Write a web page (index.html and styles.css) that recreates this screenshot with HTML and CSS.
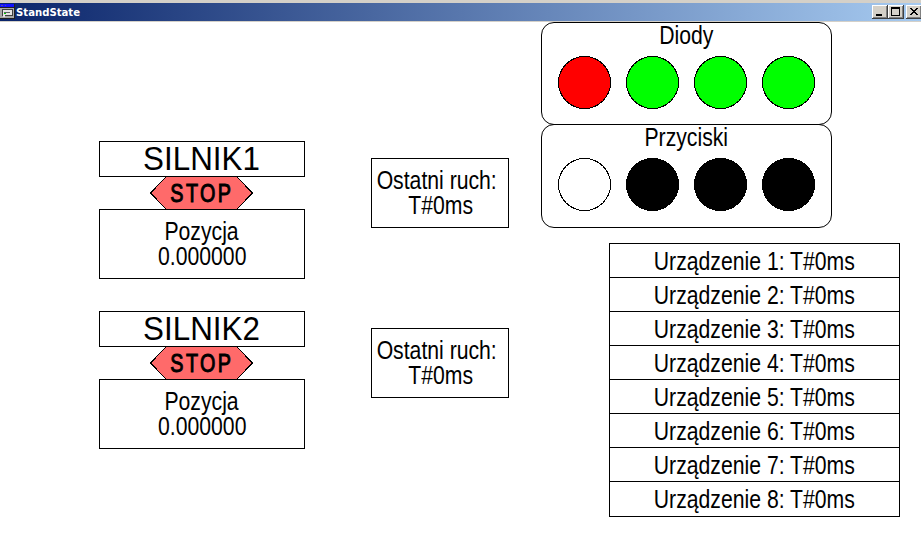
FILE: index.html
```html
<!DOCTYPE html>
<html lang="pl">
<head>
<meta charset="utf-8">
<title>StandState</title>
<link rel="stylesheet" href="styles.css">
</head>
<body>
<header class="titlebar">
  <svg class="app-icon" width="15" height="15" viewBox="0 0 15 15" shape-rendering="crispEdges">
    <path fill="#202020" d="M0 0h15v15H0z"/>
    <path fill="#1010ff" d="M0 0h14v3H0z"/><path fill="#5050a0" d="M1 1h2v1H1zM5 1h1v1H5z"/>
    <path fill="#a8a8a8" d="M0 4h14v10H0z"/>
    <path fill="#404040" d="M2 5h11v1H2zM2 5h1v7H2zM5 11h8v1H5zM12 6h1v6h-1z"/>
    <path fill="#e4e4e4" d="M3 6h9v5H5v2H3z"/><path fill="#606060" d="M4 8h6v1H4z"/>
    <path fill="#0c0" d="M4 9h2v1H4z"/>
  </svg>
  <h1 class="caption">StandState</h1>
  <div class="controls">
    <svg class="control" width="16" height="14" viewBox="0 0 16 14" shape-rendering="crispEdges"><path d="M4 9h6v2H4z"/></svg>
    <svg class="control" width="16" height="14" viewBox="0 0 16 14" shape-rendering="crispEdges"><path fill-rule="evenodd" d="M3 2h9v9H3zM4 4v6h7V4z"/></svg>
    <svg class="control close" width="16" height="14" viewBox="0 0 16 14" shape-rendering="crispEdges"><path d="M4 3h2v1h1v1h2V4h1V3h2v1h-1v1h-1v1H9v1h1v1h1v1h1v1h-2V9H9V8H7v1H6v1H4V9h1V8h1V7h1V6H6V5H5V4H4z"/></svg>
  </div>
</header>
<main class="canvas">
  <section class="motors">
    <article class="motor">
      <h2 class="box name"><span>SILNIK1</span></h2>
      <div class="state"><svg width="103" height="33" viewBox="0 0 103 33" shape-rendering="crispEdges"><path d="M16.5-.5h70l16 16.5-16 16.500h-70L.5 16z"/></svg><b>STOP</b></div>
      <div class="box position"><span>Pozycja</span><span>0.000000</span></div>
    </article>
    <article class="motor">
      <h2 class="box name"><span>SILNIK2</span></h2>
      <div class="state"><svg width="103" height="33" viewBox="0 0 103 33" shape-rendering="crispEdges"><path d="M16.500-.5h70l16 16.5-16 16.500h-70L.5 16z"/></svg><b>STOP</b></div>
      <div class="box position"><span>Pozycja</span><span>0.000000</span></div>
    </article>
  </section>
  <section class="moves">
    <div class="box move"><span class="label">Ostatni ruch:</span><span>T#0ms</span></div>
    <div class="box move"><span class="label">Ostatni ruch:</span><span>T#0ms</span></div>
  </section>
  <section class="side">
    <div class="panel diodes">
      <h2><span>Diody</span></h2>
      <div class="lamps">
        <svg class="lamp red" viewBox="0 0 53 53"><circle cx="26.500" cy="26.500" r="26"/></svg>
        <svg class="lamp green" viewBox="0 0 53 53"><circle cx="26.500" cy="26.500" r="26"/></svg>
        <svg class="lamp green" viewBox="0 0 53 53"><circle cx="26.500" cy="26.500" r="26"/></svg>
        <svg class="lamp green" viewBox="0 0 53 53"><circle cx="26.500" cy="26.500" r="26"/></svg>
      </div>
    </div>
    <div class="panel buttons">
      <h2><span>Przyciski</span></h2>
      <div class="lamps">
        <svg class="lamp white" viewBox="0 0 53 53"><circle cx="26.500" cy="26.500" r="26"/></svg>
        <svg class="lamp black" viewBox="0 0 53 53"><circle cx="26.500" cy="26.500" r="26"/></svg>
        <svg class="lamp black" viewBox="0 0 53 53"><circle cx="26.500" cy="26.500" r="26"/></svg>
        <svg class="lamp black" viewBox="0 0 53 53"><circle cx="26.500" cy="26.500" r="26"/></svg>
      </div>
    </div>
    <ul class="devices">
      <li><span>Urządzenie 1: T#0ms</span></li>
      <li><span>Urządzenie 2: T#0ms</span></li>
      <li><span>Urządzenie 3: T#0ms</span></li>
      <li><span>Urządzenie 4: T#0ms</span></li>
      <li><span>Urządzenie 5: T#0ms</span></li>
      <li><span>Urządzenie 6: T#0ms</span></li>
      <li><span>Urządzenie 7: T#0ms</span></li>
      <li><span>Urządzenie 8: T#0ms</span></li>
    </ul>
  </section>
</main>
</body>
</html>
```
FILE: styles.css
```css
* { box-sizing: border-box; }
body {
  margin: 0;
  width: 921px;
  height: 535px;
  overflow: hidden;
  background: #fff;
  color: #000;
  font: 26px/25px "Liberation Sans", Arial, sans-serif;
}
h1, h2, ul { margin: 0; padding: 0; font: inherit; list-style: none; }
svg { display: block; }

.titlebar {
  display: flex;
  height: 22px;
  padding-top: 1px;
  border-top: 3px solid #d4d0c8;
  border-bottom: 1px solid #d4d0c8;
  background: linear-gradient(90deg, #0a246a, #a6caf0);
}
.app-icon { flex: none; }
.caption {
  margin-left: 1px;
  padding-top: 1px;
  color: #fff;
  font: bold 11px/15px "DejaVu Sans", Tahoma, sans-serif;
  transform: scaleX(.92);
  transform-origin: left;
}
.controls { display: flex; margin: 1px -1px 0 auto; }
.control {
  background: #d4d0c8;
  box-shadow: inset -1px -1px #404040, inset 1px 1px #fff, inset -2px -2px #808080;
}
.close { margin-left: 2px; }

.canvas { display: flex; align-items: flex-start; padding-left: 99px; }
.canvas span { display: block; white-space: nowrap; transform: scaleX(.815); }
.box { border: 1px solid #000; }

.motors { display: grid; gap: 32px; width: 206px; padding-top: 119px; }
.name { height: 36px; display: flex; justify-content: center; padding-right: 1px; font-size: 33px; line-height: 34px; }
.canvas .name span { transform: scaleX(.95); }
.state { display: grid; justify-items: center; align-items: center; height: 32px; }
.state svg { grid-area: 1 / 1; fill: #ff6a6a; stroke: #000; margin-right: 1px; }
.state b {
  grid-area: 1 / 1;
  font-size: 25px;
  font-weight: normal;
  letter-spacing: 3px;
  -webkit-text-stroke: 1px #000;
  transform: scaleX(.79);
}
.position, .move {
  display: flex;
  flex-direction: column;
  align-items: center;
  height: 70px;
  padding-top: 9px;
}
.position { padding-right: 1px; }
.position span + span { margin-left: 2px; }

.moves {
  display: grid;
  grid-template-columns: 138px;
  gap: 100px;
  width: 138px;
  margin-left: 66px;
  padding-top: 136px;
}
.move .label { margin-right: 7px; }
.move span + span { margin-left: 2px; }

.side { width: 359px; margin-left: 32px; }
.panel {
  width: 291px;
  height: 103px;
  border: 1px solid #000;
  border-radius: 13px;
}
.panel h2 { display: flex; justify-content: center; height: 33px; }
.buttons { height: 104px; margin-top: -1px; }
.lamps { display: flex; gap: 15px; padding-left: 16px; }
.lamp { width: 53px; height: 53px; stroke: #000; shape-rendering: crispEdges; }
.red { fill: #f00; }
.green { fill: #0f0; }
.white { fill: #fff; }
.black { fill: #000; }

.devices { width: 291px; margin: 15px 0 0 68px; border: 1px solid #000; }
.devices li {
  display: flex;
  justify-content: center;
  height: 34px;
  padding-top: 5px;
  border-bottom: 1px solid #000;
}
.devices li:last-child { border-bottom: 0; }
```
